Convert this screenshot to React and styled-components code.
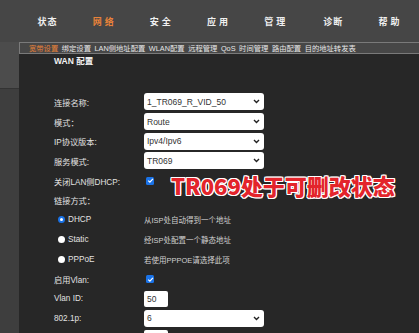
import React from 'react';
import styled, { createGlobalStyle } from 'styled-components';

const GlobalStyle = createGlobalStyle`
  html, body {
    margin: 0;
    padding: 0;
    background: #464646;
    overflow: hidden;
  }
  body {
    font-family: "Liberation Sans", "Noto Sans CJK SC", sans-serif;
  }
`;

const Page = styled.div`
  width: 419px;
  height: 333px;
  position: relative;
  overflow: hidden;
`;

const Header = styled.div`
  height: 42px;
  display: flex;
  align-items: center;
  padding-left: 19px;
  padding-top: 1px;
  box-sizing: border-box;
`;

const NavItem = styled.div`
  width: 57.3px;
  text-align: center;
  font-size: 9px;
  font-weight: bold;
  letter-spacing: ${p => (p.$wide ? '3px' : '1px')};
  color: ${p => (p.$active ? '#e8823a' : '#f0f0f0')};
`;

const Body = styled.div`
  display: flex;
  height: 291px;
`;

const LeftStrip = styled.div`
  width: 19px;
  display: flex;
  flex-direction: column;
`;

const StripTop = styled.div`
  height: 46px;
  background: #4c4c4c;
  border-bottom: 1px solid #333;
`;

const StripBottom = styled.div`
  flex: 1;
  background: #3e3e3e;
`;

const Main = styled.div`
  flex: 1;
  display: flex;
  flex-direction: column;
`;

const SubMenu = styled.div`
  height: 20px;
  box-sizing: border-box;
  border-top: 1px solid #7a7a7a;
  border-bottom: 1px solid #7a7a7a;
  border-left: 1px solid #7a7a7a;
  background: #474747;
  display: flex;
  align-items: center;
  gap: 3.6px;
  padding-left: 9px;
  font-size: 7.3px;
  white-space: nowrap;
`;

const SubItem = styled.span`
  color: ${p => (p.$active ? '#e8823a' : '#e6e6e6')};
`;

const Content = styled.div`
  flex: 1;
  background: #272727;
  padding: 1px 0 0 35px;
  position: relative;
`;

const Title = styled.div`
  font-size: 8.5px;
  font-weight: bold;
  color: #f2f2f2;
  height: 12px;
  line-height: 12px;
  margin-bottom: 25px;
`;

const Row = styled.div`
  height: 19.7px;
  display: flex;
  align-items: center;
`;

const Label = styled.div`
  width: 90px;
  font-size: 8.2px;
  color: #e2e2e2;
  white-space: nowrap;
  display: flex;
  align-items: center;
  padding-left: ${p => (p.$indent ? '4px' : '0')};
  box-sizing: border-box;
`;

const Desc = styled.div`
  font-size: 7.5px;
  color: #d0d0d0;
`;

const SelectBox = styled.div`
  width: 120px;
  height: 17px;
  background: #fff;
  border-radius: 3px;
  display: flex;
  align-items: center;
  justify-content: space-between;
  padding: 0 4px 0 3px;
  box-sizing: border-box;
  font-size: 8.5px;
  color: #333;
`;

const InputBox = styled.div`
  width: 24px;
  height: 16px;
  background: #fff;
  border-radius: 2px;
  display: flex;
  align-items: center;
  padding-left: 3px;
  box-sizing: border-box;
  font-size: 8.5px;
  color: #333;
`;

const Check = styled.div`
  width: 8px;
  height: 8px;
  margin-left: 2px;
  background: #1a73e8;
  border-radius: 1.5px;
  display: flex;
  align-items: center;
  justify-content: center;
`;

const Radio = styled.span`
  width: 7px;
  height: 7px;
  border-radius: 50%;
  background: #fff;
  box-sizing: border-box;
  border: ${p => (p.$on ? '2px solid #1a73e8' : 'none')};
  margin-right: 3px;
`;

const Overlay = styled.div`
  position: absolute;
  left: 152px;
  top: 115px;
  font-family: "Noto Sans CJK SC", sans-serif;
  font-weight: 900;
  font-size: 22px;
  color: #e3242b;
  white-space: nowrap;
  text-shadow:
    1px 0 0 #fff, -1px 0 0 #fff, 0 1px 0 #fff, 0 -1px 0 #fff,
    1px 1px 0 #fff, -1px -1px 0 #fff, 1px -1px 0 #fff, -1px 1px 0 #fff;
`;

const Chevron = () => (
  <svg width="7" height="5" viewBox="0 0 7 5">
    <path d="M1 1 L3.5 3.5 L6 1" fill="none" stroke="#222" strokeWidth="1.4" />
  </svg>
);

const Tick = () => (
  <svg width="7" height="7" viewBox="0 0 7 7">
    <path d="M1.2 3.6 L2.9 5.2 L5.9 1.8" fill="none" stroke="#fff" strokeWidth="1.2" />
  </svg>
);

const nav = [
  { t: '状态' },
  { t: '网络', active: true, wide: true },
  { t: '安全', wide: true },
  { t: '应用', wide: true },
  { t: '管理', wide: true },
  { t: '诊断' },
  { t: '帮助', wide: true },
];

const subs = ['宽带设置', '绑定设置', 'LAN侧地址配置', 'WLAN配置', '远程管理', 'QoS', '时间管理', '路由配置', '目的地址转发表'];

const Select = ({ value }) => (
  <SelectBox>
    <span>{value}</span>
    <Chevron />
  </SelectBox>
);

export default function App() {
  return (
    <Page>
      <GlobalStyle />
      <Header>
        {nav.map(n => (
          <NavItem key={n.t} $active={n.active} $wide={n.wide}>{n.t}</NavItem>
        ))}
      </Header>
      <Body>
        <LeftStrip>
          <StripTop />
          <StripBottom />
        </LeftStrip>
        <Main>
          <SubMenu>
            {subs.map((s, i) => (
              <SubItem key={s} $active={i === 0}>{s}</SubItem>
            ))}
          </SubMenu>
          <Content>
            <Title>WAN 配置</Title>
            <Row><Label>连接名称:</Label><Select value="1_TR069_R_VID_50" /></Row>
            <Row><Label>模式：</Label><Select value="Route" /></Row>
            <Row><Label>IP协议版本:</Label><Select value="Ipv4/Ipv6" /></Row>
            <Row><Label>服务模式:</Label><Select value="TR069" /></Row>
            <Row><Label>关闭LAN侧DHCP:</Label><Check><Tick /></Check></Row>
            <Row><Label>链接方式：</Label></Row>
            <Row><Label $indent><Radio $on />DHCP</Label><Desc>从ISP处自动得到一个地址</Desc></Row>
            <Row><Label $indent><Radio />Static</Label><Desc>经ISP处配置一个静态地址</Desc></Row>
            <Row><Label $indent><Radio />PPPoE</Label><Desc>若使用PPPOE请选择此项</Desc></Row>
            <Row><Label>启用Vlan:</Label><Check><Tick /></Check></Row>
            <Row><Label>Vlan ID:</Label><InputBox>50</InputBox></Row>
            <Row><Label>802.1p:</Label><Select value="6" /></Row>
            <Row><Label></Label><InputBox /></Row>
            <Overlay>TR069处于可删改状态</Overlay>
          </Content>
        </Main>
      </Body>
    </Page>
  );
}
